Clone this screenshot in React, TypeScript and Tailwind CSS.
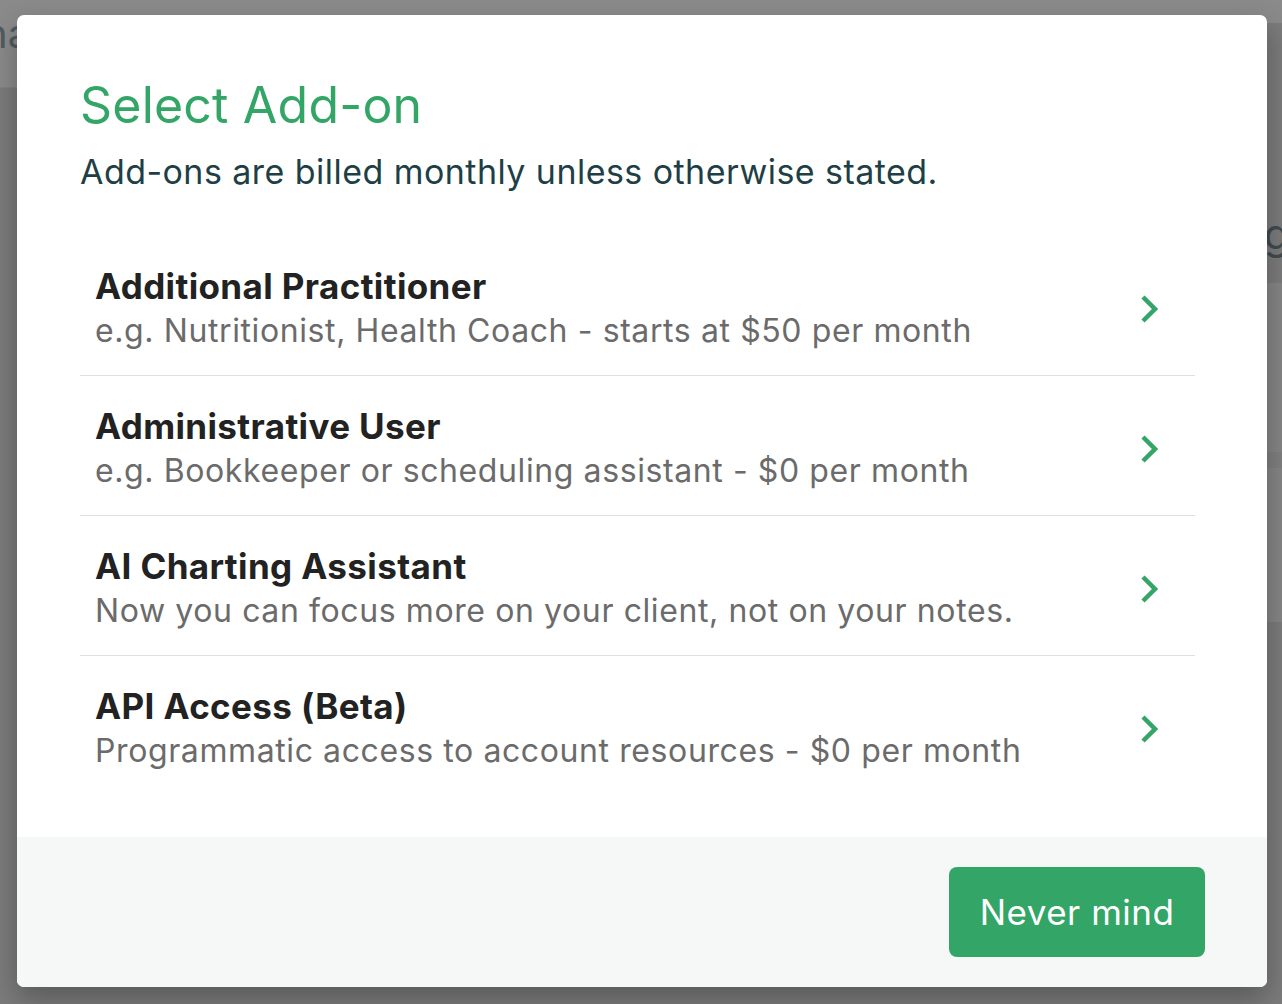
import React from "react";

const items = [
  { title: "Additional Practitioner", desc: "e.g. Nutritionist, Health Coach - starts at $50 per month" },
  { title: "Administrative User", desc: "e.g. Bookkeeper or scheduling assistant - $0 per month" },
  { title: "AI Charting Assistant", desc: "Now you can focus more on your client, not on your notes." },
  { title: "API Access (Beta)", desc: "Programmatic access to account resources - $0 per month" },
];

function Chevron() {
  return (
    <svg width="22" height="32" viewBox="0 0 22 32" fill="none" className="shrink-0 mt-[28px]">
      <path d="M4 4 L16 16 L4 28" stroke="#33a566" strokeWidth="4.5" strokeLinejoin="miter" strokeLinecap="butt" />
    </svg>
  );
}

export default function App() {
  return (
    <div
      className="relative w-[1282px] h-[1004px] overflow-hidden bg-[#7b7b7b]"
      style={{ fontFamily: "Inter, 'Noto Sans', sans-serif" }}
    >
      {/* background page (dimmed) */}
      <div className="flex h-full w-full">
        <div className="flex-1 flex flex-col">
          <div className="h-[88px] bg-[#8a8a8a] border-b border-[#828282] flex items-start pt-[14px]">
            <span className="text-[40px] text-[#4f5b5e] -ml-[16px] leading-none">na</span>
          </div>
          <div className="flex-1 bg-[#7b7b7b]" />
        </div>
        <div className="w-[150px] flex flex-col">
          <div className="h-[23px] bg-[#8a8a8a]" />
          <div className="h-[260px] bg-[#7b7b7b] flex items-start pt-[190px] pl-[107px]">
            <span className="text-[42px] text-[#3f4b4f] leading-none">ng</span>
          </div>
          <div className="h-[169px] bg-[#858585]" />
          <div className="h-[16px] bg-[#7f7f7f]" />
          <div className="h-[154px] bg-[#858585]" />
          <div className="flex-1 bg-[#7b7b7b]" />
        </div>
      </div>

      {/* modal */}
      <div className="absolute left-[17px] top-[15px] w-[1250px] h-[972px] bg-white rounded-[7px] overflow-hidden shadow-[0_12px_28px_rgba(0,0,0,0.28)] flex flex-col">
        <div className="flex-1 pl-[63px] pr-[72px] pt-[60px]">
          <h1 className="text-[50px] leading-[60px] text-[#33a566] font-normal tracking-[0.2px]">Select Add-on</h1>
          <p className="mt-[15px] text-[34px] leading-[44px] text-[#1f3f46] tracking-[0.45px]">
            Add-ons are billed monthly unless otherwise stated.
          </p>
          <div className="mt-[42px]">
            {items.map((it, i) => (
              <div
                key={it.title}
                className={
                  "flex items-start justify-between pl-[15px] pr-[34px] pt-[29px] pb-[24px] " +
                  (i < items.length - 1 ? "border-b border-[#e0e0e0]" : "")
                }
              >
                <div className="flex flex-col">
                  <div className="text-[35px] leading-[42px] font-bold text-[#222222] tracking-[0.38px]">{it.title}</div>
                  <div className="mt-[4px] text-[32px] leading-[40px] text-[#6b6b6b] tracking-[0.6px]">{it.desc}</div>
                </div>
                <Chevron />
              </div>
            ))}
          </div>
        </div>
        <div className="h-[150px] bg-[#f6f7f7] flex items-center justify-end pr-[62px]">
          <button className="w-[256px] h-[90px] rounded-[8px] bg-[#33a566] text-white text-[35px] font-normal tracking-[0.5px]">
            Never mind
          </button>
        </div>
      </div>
    </div>
  );
}
